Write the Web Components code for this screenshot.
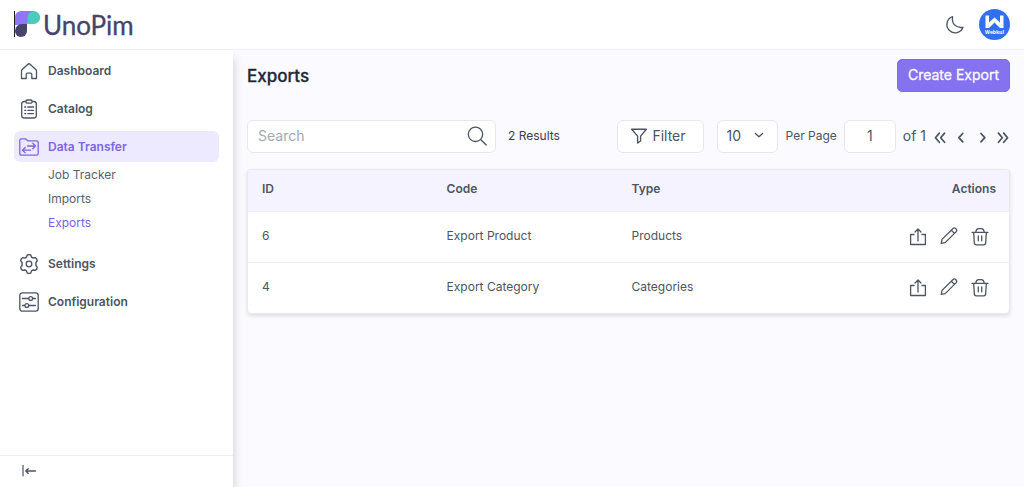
<!DOCTYPE html>
<html lang="en">
<head>
<meta charset="utf-8">
<meta name="viewport" content="width=device-width, initial-scale=1">
<title>Exports</title>
<style>
  body { margin: 0; font-family: Inter, "Liberation Sans", sans-serif; font-size: 12px; line-height: 20px; color: #4b5563; background: #fbfaff; }
</style>
</head>
<body>
<app-shell>
  <app-header slot="header"></app-header>
  <app-sidebar slot="sidebar">
    <nav-item icon="home">Dashboard</nav-item>
    <nav-item icon="clipboard">Catalog</nav-item>
    <nav-item icon="transfer" active>Data Transfer
      <nav-link slot="children">Job Tracker</nav-link>
      <nav-link slot="children">Imports</nav-link>
      <nav-link slot="children" active>Exports</nav-link>
    </nav-item>
    <nav-item icon="gear">Settings</nav-item>
    <nav-item icon="sliders">Configuration</nav-item>
  </app-sidebar>
  <page-heading>Exports<span slot="action">Create Export</span></page-heading>
  <grid-toolbar></grid-toolbar>
  <data-grid></data-grid>
</app-shell>

<script>
const ICONS = {
  home: '<path d="M2.500 9.200 8.900 3.200q1.100-1 2.200 0l6.400 6V17.500h-4.700v-4c0-.9-.5-1.400-1.300-1.400H8.500c-.8 0-1.300.5-1.300 1.400v4H2.500z"/>',
  clipboard: '<rect x="2.700" y="2.500" width="14.600" height="16.500" rx="2.500"/><rect x="7" y="1" width="6" height="3.200" rx="1.200" fill="#fff"/><path d="M8.800 8h5.700M8.800 11.300h5.700M8.800 14.600h5.700M5.700 8h1M5.700 11.300h1M5.700 14.600h1"/>',
  transfer: '<path d="M.8 16.200V3.300c0-1 .5-1.500 1.400-1.500h4.300l2.200 2h8.600c1.200 0 1.900.6 1.900 1.800v10.800c0 1.200-.6 1.800-1.800 1.800H2.600c-1.200 0-1.800-.6-1.800-2z"/><path d="M8.500 9h8m-2.700-2.700L16.500 9l-2.700 2.700M11.500 13.200h-8m2.700-2.700-2.700 2.700 2.700 2.700"/>',
  gear: '<path d="M8.300 1.800q1.700-1.200 3.400 0l.6 1.800 1.600.9 1.900-.4q1.900.8 1.800 3l-1.200 1.500v2.800l1.200 1.500q.1 2.200-1.800 3l-1.900-.4-1.600.9-.6 1.800q-1.700 1.200-3.400 0l-.6-1.800-1.600-.9-1.900.4q-1.900-.8-1.800-3l1.200-1.500V8.600L2.400 7.100q-.1-2.200 1.800-3l1.900.4 1.600-.9z" transform="translate(10 10) scale(1.080) translate(-10 -10)"/><circle cx="10" cy="10" r="2.800"/>',
  sliders: '<rect x=".8" y=".8" width="18.400" height="18.400" rx="2.600"/><path d="M3.500 6.500h6M14 6.500h2.500M3.500 13.500h2M10 13.500h6.500"/><circle cx="11.700" cy="6.500" r="1.900"/><circle cx="7.800" cy="13.500" r="1.900"/>',
  collapse: '<path d="M2.500 3v13" stroke-width="1.500"/><path d="M18 10H6m3-2.800L6 10l3 2.800" stroke-width="1.800"/>',
  moon: '<path d="M7.600 1.600C6.400 8.200 10.500 13.500 18 12.300A8.300 8.300 0 1 1 7.600 1.600z"/>',
  search: '<circle cx="8.500" cy="8.300" r="7.200"/><path d="M13.600 13.500 19.200 19"/>',
  filter: '<path d="M.8 1.500h18.400L12 10.200v6L8.300 18.800v-8.600z" stroke-width="1.700"/>',
  chevron: '<path d="M4 7.500l6 5.500 6-5.500" stroke-width="2.200"/>',
  first: '<path d="M9 4.500 3.500 11 9 17.500M16.500 4.500 11 11l5.500 6.500" stroke-width="2.500"/>',
  prev: '<path d="M12.500 5 7 11l5.500 6" stroke-width="2.500"/>',
  next: '<path d="M8.500 5l5.500 6-5.500 6" stroke-width="2.500"/>',
  last: '<path d="M3.500 4.500 9 11l-5.500 6.500M11 4.500l5.500 6.500-5.500 6.500" stroke-width="2.500"/>',
  share: '<path d="M6 8.500H2.600v10h14.800v-10H14M10 15V3.200M7 6l3-3 3 3"/>',
  pencil: '<path d="M2.200 17.400l.8-4L13.800 2.700c1-1 2-1 2.900-.1l.4.400c.9.900.9 1.900-.1 2.900L6.200 16.600zM12.300 4.200l3.200 3.200"/>',
  trash: '<path d="M2 6.300h16M5.800 6C6 3.900 7.200 2.600 8.800 2.600h2.400c1.600 0 2.800 1.300 3 3.400M3.700 6.300l.6 10.500c.1 1.400.8 2 2.100 2h7.200c1.300 0 2-.6 2.100-2l.6-10.500M8.300 10v4.800M11.700 10v4.800"/>'
};

function define(name, render) {
  customElements.define(name, class extends HTMLElement {
    connectedCallback() {
      if (this.shadowRoot) return;
      this.attachShadow({ mode: 'open' }).innerHTML = render(this);
    }
  });
}

define('ui-icon', el => `
  <style>
    :host { display: inline-flex; flex: none; width: var(--icon-size, 20px); height: var(--icon-size, 20px); }
    svg { width: 100%; height: 100%; fill: none; stroke: currentColor; stroke-width: 1.300; stroke-linejoin: round; stroke-linecap: round; }
  </style>
  <svg viewBox="0 0 20 20" aria-hidden="true">${ICONS[el.getAttribute('name')]}</svg>`);

define('app-shell', () => `
  <style>
    :host { display: grid; grid-template: auto 1fr / 233px minmax(0, 1fr); min-height: 100vh; }
    slot[name=header] { display: block; grid-column: 1 / -1; }
    slot[name=sidebar] { display: grid; }
    main { padding: 9px 14px; }
  </style>
  <slot name="header"></slot>
  <slot name="sidebar"></slot>
  <main><slot></slot></main>`);

define('brand-logo', () => `
  <style>
    :host { display: block; }
    a { display: flex; align-items: center; gap: 3px; color: #46446b; text-decoration: none; font: 400 26px/28px Lato, sans-serif; -webkit-text-stroke: 0.3px #46446b; }
    svg { width: 26px; height: 28px; }
  </style>
  <a href="#">
    <svg viewBox="0 0 26 28" aria-hidden="true">
      <path d="M1 14V6a6 6 0 0 1 6-6h13v6l-7 7v1z" fill="#8f76f7"/>
      <path d="M13.500 13V6.500a6.300 6.500 0 1 1 6.300 6.500z" fill="#4bcbb9"/>
      <path d="M13 13v7a6 6 0 0 1-12 0 7 7 0 0 1 7-7z" fill="#46446b"/>
      <path d="M.5 0v26" stroke="#222"/>
    </svg>
    <span>UnoPim</span>
  </a>`);

define('app-header', () => `
  <style>
    header { display: flex; align-items: center; justify-content: space-between; height: 50px; padding: 0 14px; background: #fff; border-bottom: 1px solid #efeff5; box-sizing: border-box; }
    div { display: flex; align-items: center; gap: 14px; }
    button { display: flex; border: 0; padding: 0; background: none; color: #4b5563; cursor: pointer; }
    .avatar { width: 31px; height: 31px; border-radius: 50%; background: #3070f0; }
    .avatar svg { width: 31px; height: 31px; }
    text { font: 700 5px "Open Sans", sans-serif; fill: #fff; }
  </style>
  <header>
    <brand-logo></brand-logo>
    <div>
      <button aria-label="Toggle dark mode"><ui-icon name="moon"></ui-icon></button>
      <button class="avatar" aria-label="Account">
        <svg viewBox="0 0 31 31">
          <path d="M6.500 6.500h3.500v7l5.500-5 5.500 5v-7h3.500v12.500h-3.500l-5.500-5.500-5.500 5.500H6.500z" fill="#fff"/>
          <text x="15.500" y="25" text-anchor="middle">Webkul</text>
        </svg>
      </button>
    </div>
  </header>`);

define('app-sidebar', () => `
  <style>
    :host { display: flex; flex-direction: column; background: #fff; box-shadow: 0 8px 10px rgba(0,0,0,.2); clip-path: inset(0 -12px 0 0); }
    nav { flex: 1; display: flex; flex-direction: column; gap: 7px; padding: 5px 14px; }
    footer { border-top: 1px solid #f0f0f2; padding: 7px 21px 8px; }
    button { display: flex; border: 0; padding: 0; background: none; color: #4b5563; --icon-size: 16px; }
  </style>
  <nav aria-label="Main"><slot></slot></nav>
  <footer><button aria-label="Collapse menu"><ui-icon name="collapse"></ui-icon></button></footer>`);

define('nav-item', el => `
  <style>
    :host { display: block; }
    a { display: flex; align-items: center; gap: 9px; height: 31px; padding: 0 5px; border-radius: 6px; color: #4b5563; text-decoration: none; font-weight: 600; }
    :host([active]) a { background: #ede9fe; color: #7c66e3; }
    .children { display: flex; flex-direction: column; gap: 4px; padding: 3px 0 8px 34px; }
    :host(:not([active])) .children { display: none; }
  </style>
  <a href="#"><ui-icon name="${el.getAttribute('icon')}"></ui-icon><span><slot></slot></span></a>
  <div class="children"><slot name="children"></slot></div>`);

define('nav-link', () => `
  <style>
    :host { display: block; }
    a { display: block; color: #57616f; text-decoration: none; }
    :host([active]) a { color: #7c5fe8; }
  </style>
  <a href="#"><slot></slot></a>`);

define('page-heading', () => `
  <style>
    :host { display: flex; align-items: center; justify-content: space-between; }
    h1 { margin: 0; font-size: 17px; line-height: 24px; font-weight: 500; -webkit-text-stroke: 0.3px currentColor; color: #1f2937; }
    button { height: 33px; padding: 0 10px 2px; border: 1px solid #7c6bec; border-radius: 5px; background: #8472ee; color: #fbfaff; font: 400 14px/20px Inter, sans-serif; -webkit-text-stroke: 0.3px currentColor; }
  </style>
  <h1><slot></slot></h1>
  <button><slot name="action"></slot></button>`);

define('grid-toolbar', () => `
  <style>
    :host { display: flex; align-items: center; justify-content: space-between; margin-top: 28px; color: #4b5563; }
    .group { display: flex; align-items: center; }
    .box { display: flex; align-items: center; height: 33px; box-sizing: border-box; background: #fff; border: 1px solid #e6e7ec; border-radius: 6px; color: #4b5563; font: 400 14px/20px Inter, sans-serif; }
    .search { width: 249px; padding: 0 8px 2px 10px; }
    .search input { flex: 1; min-width: 0; border: 0; padding: 0; outline: 0; background: none; font: inherit; color: inherit; }
    input::placeholder { color: #a3aab5; opacity: 1; }
    .count, label[for] { padding-bottom: 2px; }
    .count { margin-left: 12px; color: #374151; }
    .filter { gap: 5px; padding: 0 17px 2px 13px; --icon-size: 16px; }
    .size { position: relative; margin: 0 8px 0 13px; --icon-size: 12px; }
    .size select { appearance: none; width: 61px; padding: 0 9px 2px; }
    .size ui-icon { position: absolute; right: 13px; top: 9px; pointer-events: none; }
    .page { width: 52px; margin: 0 7px; padding: 0 0 2px; text-align: center; }
    .total { font-size: 14px; padding-bottom: 2px; }
    .pager { display: flex; gap: 7px; margin-left: 7px; --icon-size: 14px; }
    .pager button { display: flex; border: 0; padding: 0; background: none; color: #4b5563; }
  </style>
  <div class="group">
    <label class="box search"><input type="text" placeholder="Search" aria-label="Search"><ui-icon name="search"></ui-icon></label>
    <span class="count">2 Results</span>
  </div>
  <div class="group">
    <button class="box filter"><ui-icon name="filter"></ui-icon>Filter</button>
    <div class="size"><select id="size" class="box"><option>10</option><option>20</option><option>50</option></select><ui-icon name="chevron"></ui-icon></div>
    <label for="size">Per Page</label>
    <input class="box page" type="text" value="1" aria-label="Page">
    <span class="total">of 1</span>
    <div class="pager">
      <button aria-label="First page"><ui-icon name="first"></ui-icon></button>
      <button aria-label="Previous page"><ui-icon name="prev"></ui-icon></button>
      <button aria-label="Next page"><ui-icon name="next"></ui-icon></button>
      <button aria-label="Last page"><ui-icon name="last"></ui-icon></button>
    </div>
  </div>`);

const ROWS = [
  { id: 6, code: 'Export Product', type: 'Products' },
  { id: 4, code: 'Export Category', type: 'Categories' }
];

define('data-grid', () => `
  <style>
    :host { display: block; margin-top: 16px; border: 1px solid #e8e8ef; border-radius: 4px; background: #fff; overflow: hidden; box-shadow: 0 2px 4px rgba(0,0,0,.12); }
    table { width: 100%; border-collapse: collapse; table-layout: fixed; }
    th, td { padding: 0 0 2px; text-align: left; box-sizing: border-box; }
    th { height: 41px; background: #f5f3ff; color: #4b5563; font-weight: 600; }
    td { height: 51px; border-top: 1px solid #ededf3; }
    th:first-child, td:first-child { padding-left: 14px; width: 26.1%; }
    th:nth-child(2), th:nth-child(3) { width: 24.3%; }
    th:last-child { text-align: right; padding-right: 13px; }
    .actions { display: flex; justify-content: flex-end; gap: 11px; padding-right: 19px; }
    button { display: flex; border: 0; padding: 0; background: none; color: #4b5563; }
  </style>
  <table>
    <thead><tr><th>ID</th><th>Code</th><th>Type</th><th>Actions</th></tr></thead>
    <tbody>${ROWS.map(r => `
      <tr><td>${r.id}</td><td>${r.code}</td><td>${r.type}</td><td><div class="actions">
        <button aria-label="Export"><ui-icon name="share"></ui-icon></button>
        <button aria-label="Edit"><ui-icon name="pencil"></ui-icon></button>
        <button aria-label="Delete"><ui-icon name="trash"></ui-icon></button>
      </div></td></tr>`).join('')}
    </tbody>
  </table>`);
</script>
</body>
</html>
